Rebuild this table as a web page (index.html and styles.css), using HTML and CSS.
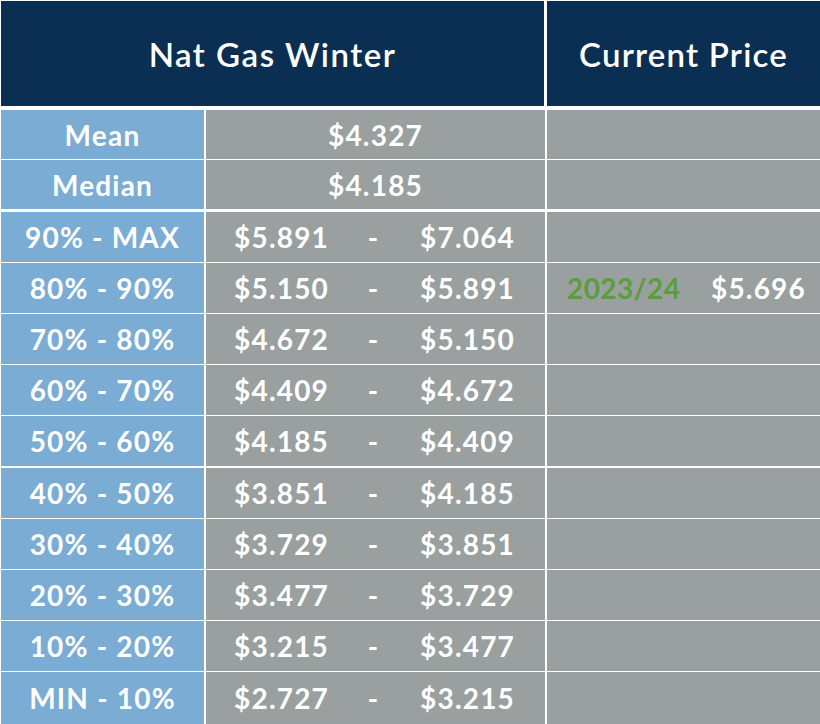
FILE: index.html
```html
<!DOCTYPE html>
<html>
<head>
<meta charset="utf-8">
<link rel="stylesheet" href="styles.css">
</head>
<body>
<div class="table">
  <div class="head">
    <div class="hcell title">Nat Gas Winter</div>
    <div class="hcell price-title">Current Price</div>
  </div>
  <div class="row first">
    <div class="label">Mean</div>
    <div class="val single">$4.327</div>
    <div class="cur"></div>
  </div>
  <div class="row">
    <div class="label">Median</div>
    <div class="val single">$4.185</div>
    <div class="cur"></div>
  </div>
  <div class="row group">
    <div class="label">90% - MAX</div>
    <div class="val range"><span>$5.891</span><span class="dash">-</span><span>$7.064</span></div>
    <div class="cur"></div>
  </div>
  <div class="row">
    <div class="label">80% - 90%</div>
    <div class="val range"><span>$5.150</span><span class="dash">-</span><span>$5.891</span></div>
    <div class="cur"><span class="year">2023/24</span><span class="now">$5.696</span></div>
  </div>
  <div class="row">
    <div class="label">70% - 80%</div>
    <div class="val range"><span>$4.672</span><span class="dash">-</span><span>$5.150</span></div>
    <div class="cur"></div>
  </div>
  <div class="row">
    <div class="label">60% - 70%</div>
    <div class="val range"><span>$4.409</span><span class="dash">-</span><span>$4.672</span></div>
    <div class="cur"></div>
  </div>
  <div class="row">
    <div class="label">50% - 60%</div>
    <div class="val range"><span>$4.185</span><span class="dash">-</span><span>$4.409</span></div>
    <div class="cur"></div>
  </div>
  <div class="row half">
    <div class="label">40% - 50%</div>
    <div class="val range"><span>$3.851</span><span class="dash">-</span><span>$4.185</span></div>
    <div class="cur"></div>
  </div>
  <div class="row">
    <div class="label">30% - 40%</div>
    <div class="val range"><span>$3.729</span><span class="dash">-</span><span>$3.851</span></div>
    <div class="cur"></div>
  </div>
  <div class="row">
    <div class="label">20% - 30%</div>
    <div class="val range"><span>$3.477</span><span class="dash">-</span><span>$3.729</span></div>
    <div class="cur"></div>
  </div>
  <div class="row">
    <div class="label">10% - 20%</div>
    <div class="val range"><span>$3.215</span><span class="dash">-</span><span>$3.477</span></div>
    <div class="cur"></div>
  </div>
  <div class="row last">
    <div class="label">MIN - 10%</div>
    <div class="val range"><span>$2.727</span><span class="dash">-</span><span>$3.215</span></div>
    <div class="cur"></div>
  </div>
</div>
</body>
</html>
```

FILE: styles.css
```css
html, body {
  margin: 0;
  padding: 0;
  background: #ffffff;
}
body {
  padding: 1px 0 0 1px;
  font-family: "Lato", "Liberation Sans", sans-serif;
  color: #ffffff;
  overflow: hidden;
}
.table {
  display: flex;
  flex-direction: column;
  width: 819px;
}
.head {
  display: grid;
  grid-template-columns: 543px 273px;
  column-gap: 3px;
  height: 105px;
}
.hcell {
  background: #0b2f52;
  display: flex;
  align-items: center;
  justify-content: center;
}
.title {
  font-size: 33px;
  font-weight: 600;
  letter-spacing: 1.5px;
}
.price-title {
  font-size: 33px;
  font-weight: 600;
  letter-spacing: 1.2px;
}
.row {
  display: grid;
  grid-template-columns: 203px 339px 273px;
  column-gap: 2px;
  height: 50px;
  margin-top: 1px;
  font-size: 28px;
  font-weight: 700;
  letter-spacing: 1.2px;
}
.row.first {
  margin-top: 4px;
  height: 49px;
}
.row.first + .row {
  height: 49px;
}
.row.group {
  margin-top: 3px;
}
.row.half {
  margin-top: 2px;
}
.row.last {
  height: 52px;
}
.label {
  background: #7aacd4;
  display: flex;
  align-items: center;
  justify-content: center;
  white-space: nowrap;
}
.val {
  background: #99a09f;
  display: flex;
  align-items: center;
}
.val.single {
  justify-content: center;
}
.val.range {
  display: grid;
  grid-template-columns: 93px 93px 93px;
  padding-left: 28px;
  align-items: center;
}
.dash {
  text-align: center;
}
.cur {
  background: #99a09f;
  display: flex;
  align-items: center;
  justify-content: space-between;
  padding: 0 14px 0 20px;
}
.year {
  color: #5a9e3b;
  letter-spacing: 0.4px;
}
```
